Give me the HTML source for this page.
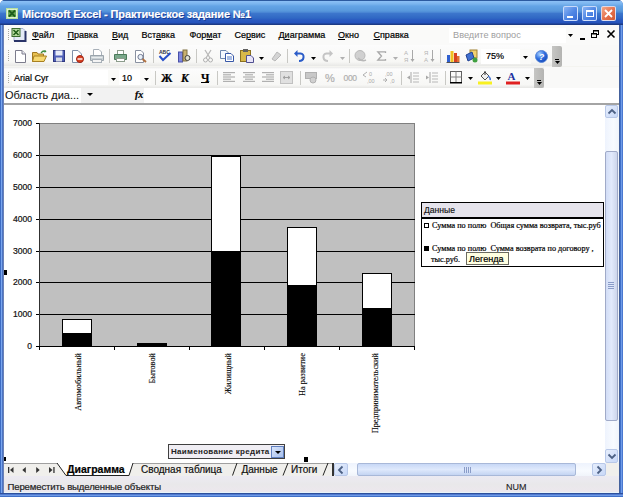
<!DOCTYPE html><html><head><meta charset="utf-8"><style>
*{margin:0;padding:0;box-sizing:border-box}
html,body{width:623px;height:497px;overflow:hidden;background:#fff}
body{position:relative;font-family:"Liberation Sans",sans-serif;font-size:9px;color:#000}
.a{position:absolute}
.t{position:absolute;white-space:nowrap;line-height:1;-webkit-text-stroke:0.2px currentColor}
svg{position:absolute;overflow:visible}
.u{text-decoration:underline;text-underline-offset:1px}
</style></head><body>
<div class="a" style="left:0px;top:0px;width:623px;height:497px;background:#3d6cc4;border-radius:5px 5px 0 0"></div>
<div class="a" style="left:1px;top:22px;width:1px;height:475px;background:#79a6ee"></div>
<div class="a" style="left:2px;top:22px;width:1px;height:475px;background:#4d74c4"></div>
<div class="a" style="left:3px;top:22px;width:1px;height:475px;background:#6a82b6"></div>
<div class="a" style="left:619px;top:22px;width:1px;height:475px;background:#44619c"></div>
<div class="a" style="left:620px;top:22px;width:1px;height:475px;background:#3f6fc8"></div>
<div class="a" style="left:621px;top:22px;width:1px;height:475px;background:#6f9ce8"></div>
<div class="a" style="left:622px;top:22px;width:1px;height:475px;background:#4a78d0"></div>
<div class="a" style="left:0px;top:493px;width:623px;height:1px;background:#2e4f9c"></div>
<div class="a" style="left:0px;top:494px;width:623px;height:1px;background:#4f7ad0"></div>
<div class="a" style="left:0px;top:495px;width:623px;height:1px;background:#6f9ae6"></div>
<div class="a" style="left:0px;top:496px;width:623px;height:1px;background:#4070c8"></div>
<div class="a" style="left:0px;top:0px;width:623px;height:25px;border-radius:5px 5px 0 0;background:linear-gradient(#2c5aa0 0px,#2c5aa0 1px,#8cc0f6 1px,#7ab4ee 4px,#64a4e6 6px,#5898dc 11px,#4a86d4 12.5px,#3c76cc 13.5px,#3068c4 18px,#2a5ac0 20px,#2452bc 23px,#1c3a84 24px,#1c3a84 25px)"></div>
<svg style="left:6px;top:8px;" width="12" height="11" viewBox="0 0 12 11"><rect x="0.5" y="0.5" width="11" height="10" fill="#dff2d0" stroke="#b8e0a0" stroke-width="1"/><rect x="2" y="2" width="8" height="7" fill="#6aa858"/><path d="M3,2.5 L9,8.5 M9,2.5 L3,8.5" stroke="#1d5e1a" stroke-width="1.8"/></svg>
<div class="t" style="left:22px;top:9px;color:#fff;font-weight:bold;font-size:11px;letter-spacing:-0.14px;text-shadow:1px 1px 0 #1a3c94">Microsoft Excel - Практическое задание №1</div>
<div class="a" style="left:563px;top:6px;width:15px;height:15px;border:1px solid rgba(225,235,255,0.85);border-radius:2px;background:linear-gradient(135deg,#8ab4f4,#4f86e4 55%,#3a6ed8)"><div class="a" style="left:3px;top:9px;width:6px;height:2px;background:#fff"></div></div>
<div class="a" style="left:582px;top:6px;width:15px;height:15px;border:1px solid rgba(225,235,255,0.85);border-radius:2px;background:linear-gradient(135deg,#8ab4f4,#4f86e4 55%,#3a6ed8)"><div class="a" style="left:3px;top:3px;width:8px;height:7px;border:1px solid #fff;border-top-width:2px"></div></div>
<div class="a" style="left:601px;top:6px;width:15px;height:15px;border:1px solid rgba(225,235,255,0.85);border-radius:2px;background:linear-gradient(135deg,#f4a888,#e4704c 55%,#d45a30)"><svg style="left:2px;top:2px" width="9" height="9"><path d="M1,1 L8,8 M8,1 L1,8" stroke="#fff" stroke-width="1.8"/></svg></div>
<div class="a" style="left:4px;top:25px;width:615px;height:468px;background:#f9f9f8"></div>
<div class="a" style="left:4px;top:25px;width:615px;height:20px;background:#fafaf9"></div>
<div class="a" style="left:8px;top:29px;width:1px;height:1px;background:#a8a8a0"></div>
<div class="a" style="left:8px;top:31px;width:1px;height:1px;background:#a8a8a0"></div>
<div class="a" style="left:8px;top:33px;width:1px;height:1px;background:#a8a8a0"></div>
<div class="a" style="left:8px;top:35px;width:1px;height:1px;background:#a8a8a0"></div>
<div class="a" style="left:8px;top:37px;width:1px;height:1px;background:#a8a8a0"></div>
<div class="a" style="left:8px;top:39px;width:1px;height:1px;background:#a8a8a0"></div>
<svg style="left:11px;top:28px;" width="16" height="14" viewBox="0 0 16 14"><path d="M3,0.5 H12 L14.5,3 V13 H3 Z" fill="#e4eaf6" stroke="#a8b4d0"/><path d="M14.5,3 V13 H3" fill="none" stroke="#2a3468" stroke-width="2"/><rect x="1" y="0.5" width="8" height="8" fill="#b8dca0" stroke="#3a6a30"/><path d="M2.5,2 L7.5,7 M7.5,2 L2.5,7" stroke="#1e5a18" stroke-width="1.5"/></svg>
<div class="t" style="left:32px;top:31px;font-size:9px;color:#000"><span class="u">Ф</span>айл</div>
<div class="t" style="left:67.5px;top:31px;font-size:9px;color:#000"><span class="u">П</span>равка</div>
<div class="t" style="left:112px;top:31px;font-size:9px;color:#000"><span class="u">В</span>ид</div>
<div class="t" style="left:141.5px;top:31px;font-size:9px;color:#000">Вст<span class="u">а</span>вка</div>
<div class="t" style="left:189.5px;top:31px;font-size:9px;color:#000">Фор<span class="u">м</span>ат</div>
<div class="t" style="left:234.5px;top:31px;font-size:9px;color:#000">Се<span class="u">р</span>вис</div>
<div class="t" style="left:278.5px;top:31px;font-size:9px;color:#000">Д<span class="u">и</span>аграмма</div>
<div class="t" style="left:338px;top:31px;font-size:9px;color:#000"><span class="u">О</span>кно</div>
<div class="t" style="left:373.5px;top:31px;font-size:9px;color:#000"><span class="u">С</span>правка</div>
<div class="a" style="left:449px;top:28px;width:117px;height:15px;background:#fff"></div>
<div class="t" style="left:453px;top:30.5px;font-size:9.2px;color:#a0a0a0;-webkit-text-stroke:0">Введите вопрос</div>
<svg style="left:567.5px;top:34px;" width="5" height="3" viewBox="0 0 5 3"><polygon points="0,0 5,0 2.5,3" fill="#000"/></svg>
<div class="a" style="left:580px;top:38px;width:5px;height:2px;background:#000"></div>
<svg style="left:591px;top:30px;" width="8" height="8" viewBox="0 0 8 8"><rect x="2.5" y="0.5" width="5" height="4" fill="none" stroke="#000"/><rect x="2" y="0" width="6" height="1.5" fill="#000"/><rect x="0.5" y="3.5" width="5" height="4" fill="#f9f9f6" stroke="#000"/><rect x="0" y="3" width="6" height="1.5" fill="#000"/></svg>
<svg style="left:607px;top:30px;" width="8" height="8" viewBox="0 0 8 8"><path d="M0.5,0.5 L7.5,7.5 M7.5,0.5 L0.5,7.5" stroke="#000" stroke-width="1.6"/></svg>
<div class="a" style="left:4px;top:45px;width:558px;height:21px;background:linear-gradient(#fcfcfc,#f7f7f5 80%,#e8e8e6)"></div>
<div class="a" style="left:4px;top:66px;width:615px;height:1px;background:#f4f4f0"></div>
<div class="a" style="left:8px;top:50px;width:1px;height:1px;background:#a8a8a0"></div>
<div class="a" style="left:8px;top:52px;width:1px;height:1px;background:#a8a8a0"></div>
<div class="a" style="left:8px;top:54px;width:1px;height:1px;background:#a8a8a0"></div>
<div class="a" style="left:8px;top:56px;width:1px;height:1px;background:#a8a8a0"></div>
<div class="a" style="left:8px;top:58px;width:1px;height:1px;background:#a8a8a0"></div>
<div class="a" style="left:8px;top:60px;width:1px;height:1px;background:#a8a8a0"></div>
<div class="a" style="left:552px;top:46px;width:10px;height:21px;background:linear-gradient(90deg,#c6c6c4,#b4b4b2);border-radius:0 2px 2px 0"></div>
<div class="a" style="left:555px;top:59px;width:4px;height:1px;background:#000"></div>
<svg style="left:554.5px;top:61px;" width="5" height="3" viewBox="0 0 5 3"><polygon points="0,0 5,0 2.5,3" fill="#000"/></svg>
<div class="a" style="left:109px;top:49px;width:1px;height:14px;background:#c8c8c4"></div>
<div class="a" style="left:153px;top:49px;width:1px;height:14px;background:#c8c8c4"></div>
<div class="a" style="left:196px;top:49px;width:1px;height:14px;background:#c8c8c4"></div>
<div class="a" style="left:287px;top:49px;width:1px;height:14px;background:#c8c8c4"></div>
<div class="a" style="left:349px;top:49px;width:1px;height:14px;background:#c8c8c4"></div>
<div class="a" style="left:440px;top:49px;width:1px;height:14px;background:#c8c8c4"></div>
<svg style="left:15px;top:50px;" width="11" height="13" viewBox="0 0 11 13"><path d="M0.5,0.5 H7 L10.5,4 V12.5 H0.5 Z" fill="#fff" stroke="#7c7c8c"/><path d="M7,0.5 V4 H10.5" fill="#e8e8f0" stroke="#7c7c8c"/></svg>
<svg style="left:32px;top:50px;" width="15" height="12" viewBox="0 0 15 12"><path d="M0.5,2.5 H5 L6,4 H11.5 V11.5 H0.5 Z" fill="#e8c050" stroke="#a07820"/><path d="M2,6 H14.5 L12,11.5 H0.5 Z" fill="#f6d870" stroke="#a88020"/><path d="M9,3 Q11,0 14,1.5" stroke="#3a8a3a" fill="none" stroke-width="1.3"/><path d="M13,0 L14.5,2 L12,2.5Z" fill="#3a8a3a"/></svg>
<svg style="left:53px;top:50px;" width="12" height="12" viewBox="0 0 12 12"><rect x="0.5" y="0.5" width="11" height="11" fill="#5060b8" stroke="#303880"/><rect x="2.5" y="0.5" width="7" height="5" fill="#e8ecf8"/><rect x="3" y="7.5" width="6" height="4" fill="#d8dce8"/></svg>
<svg style="left:72px;top:50px;" width="12" height="13" viewBox="0 0 12 13"><path d="M0.5,0.5 H6 L9.5,4 V12.5 H0.5 Z" fill="#fff" stroke="#8090a8"/><circle cx="8" cy="9" r="3.5" fill="#d84020" stroke="#a02010"/><rect x="5.5" y="8.3" width="5" height="1.4" fill="#fff"/></svg>
<svg style="left:90px;top:49px;" width="14" height="14" viewBox="0 0 14 14"><path d="M3.5,0.5 H9 L11.5,3 V7 H3.5 Z" fill="#fff" stroke="#a8b0b8"/><path d="M0.5,6.5 H13.5 V11.5 H0.5 Z" fill="#c8d0d4" stroke="#9aa4ac"/><rect x="2.5" y="10.5" width="9" height="3" fill="#f4f4f4" stroke="#a8b0b8"/><rect x="1.5" y="8" width="11" height="1" fill="#e8ecee"/></svg>
<svg style="left:114px;top:50px;" width="13" height="12" viewBox="0 0 13 12"><rect x="3.5" y="0.5" width="6" height="4" fill="#fff" stroke="#8c9c8c"/><path d="M0.5,4.5 H12.5 V9.5 H0.5 Z" fill="#7aa88a" stroke="#4a7a5a"/><rect x="2.5" y="8.5" width="8" height="3" fill="#fff" stroke="#8c9c8c"/></svg>
<svg style="left:135px;top:50px;" width="12" height="13" viewBox="0 0 12 13"><path d="M0.5,0.5 H6 L8.5,3 V12.5 H0.5 Z" fill="#fff" stroke="#8890a0"/><circle cx="5.5" cy="7" r="2.6" fill="#e8f0f8" stroke="#707890"/><path d="M7.5,9 L11,12" stroke="#b07040" stroke-width="2"/></svg>
<svg style="left:158px;top:49px;" width="14" height="13" viewBox="0 0 14 13"><text x="1" y="5" font-size="5" font-family="Liberation Sans" font-weight="bold" fill="#303040">ABC</text><path d="M1.5,7 L5,11 L12.5,4" fill="none" stroke="#2850c8" stroke-width="2"/></svg>
<svg style="left:178px;top:49px;" width="13" height="14" viewBox="0 0 13 14"><rect x="0.5" y="3" width="4" height="10" fill="#8088e0" stroke="#4850a8"/><rect x="5" y="1" width="4" height="11" fill="#c8b070" stroke="#807040"/><circle cx="9.5" cy="9" r="2.5" fill="#e0e0d0" stroke="#404040"/></svg>
<svg style="left:203px;top:50px;" width="10" height="13" viewBox="0 0 10 13"><path d="M2,0 L7,8 M8,0 L3,8" stroke="#b8b8b8" stroke-width="1.3"/><circle cx="2.5" cy="10" r="2" fill="none" stroke="#b0b0b0"/><circle cx="7.5" cy="10" r="2" fill="none" stroke="#b0b0b0"/></svg>
<svg style="left:220px;top:50px;" width="14" height="12" viewBox="0 0 14 12"><path d="M0.5,0.5 H6 L8.5,3 V8.5 H0.5 Z" fill="#f4f8ff" stroke="#7088b0"/><path d="M5.5,3.5 H11 L13.5,6 V11.5 H5.5 Z" fill="#fff" stroke="#3858a8"/><path d="M7,7 H12 M7,9 H12" stroke="#5078c8"/></svg>
<svg style="left:240px;top:49px;" width="14" height="14" viewBox="0 0 14 14"><rect x="0.5" y="1.5" width="10" height="11" fill="#d8b848" stroke="#8a7020"/><rect x="3" y="0" width="5" height="3" fill="#606060"/><path d="M6.5,6.5 H11 L13.5,9 V13.5 H6.5 Z" fill="#e8e4f8" stroke="#505090"/></svg>
<svg style="left:258.5px;top:57px;" width="5" height="3" viewBox="0 0 5 3"><polygon points="0,0 5,0 2.5,3" fill="#000"/></svg>
<svg style="left:271px;top:50px;" width="11" height="12" viewBox="0 0 11 12"><path d="M1,9 L6,2 L10,5 L4,11 Z" fill="#d4d4d4" stroke="#b8b8b8"/></svg>
<svg style="left:294px;top:50px;" width="11" height="12" viewBox="0 0 11 12"><path d="M2,3.5 H6.5 Q10,4 9.5,7.5 Q9,11 5,11" fill="none" stroke="#2a5cc8" stroke-width="2"/><path d="M0,3.5 L3.5,0 V7 Z" fill="#2a5cc8"/></svg>
<svg style="left:310.5px;top:57px;" width="5" height="3" viewBox="0 0 5 3"><polygon points="0,0 5,0 2.5,3" fill="#000"/></svg>
<svg style="left:322px;top:50px;" width="11" height="12" viewBox="0 0 11 12"><path d="M9,3.5 H4.5 Q1,4 1.5,7.5 Q2,11 6,11" fill="none" stroke="#c4c4c4" stroke-width="2"/><path d="M11,3.5 L7.5,0 V7 Z" fill="#c4c4c4"/></svg>
<svg style="left:339.5px;top:57px;" width="5" height="3" viewBox="0 0 5 3"><polygon points="0,0 5,0 2.5,3" fill="#b0b0b0"/></svg>
<svg style="left:354px;top:50px;" width="12" height="12" viewBox="0 0 12 12"><circle cx="6" cy="5.5" r="5" fill="#d0d0d0" stroke="#b8b8b8"/><path d="M4,8 Q8,12 12,10" fill="none" stroke="#b8b8b8" stroke-width="1.5"/></svg>
<svg style="left:377px;top:51px;" width="9" height="10" viewBox="0 0 9 10"><path d="M8.5,2 V0.8 H0.8 L4.5,5 L0.8,9.2 H8.5 V8" fill="none" stroke="#a8a8a8" stroke-width="1.3"/></svg>
<svg style="left:392.5px;top:57px;" width="5" height="3" viewBox="0 0 5 3"><polygon points="0,0 5,0 2.5,3" fill="#b0b0b0"/></svg>
<svg style="left:404px;top:49px;" width="11" height="14" viewBox="0 0 11 14"><text x="0" y="6" font-size="6" font-family="Liberation Sans" fill="#b4b4b4">A</text><text x="0" y="13" font-size="6" font-family="Liberation Sans" fill="#b4b4b4">Я</text><path d="M8.5,1 V12" stroke="#a8a8a8"/><path d="M6.5,10 L8.5,13 L10.5,10" fill="#a8a8a8"/></svg>
<svg style="left:424px;top:49px;" width="11" height="14" viewBox="0 0 11 14"><text x="0" y="6" font-size="6" font-family="Liberation Sans" fill="#b4b4b4">Я</text><text x="0" y="13" font-size="6" font-family="Liberation Sans" fill="#b4b4b4">A</text><path d="M8.5,1 V12" stroke="#a8a8a8"/><path d="M6.5,10 L8.5,13 L10.5,10" fill="#a8a8a8"/></svg>
<svg style="left:446px;top:49px;" width="14" height="14" viewBox="0 0 14 14"><path d="M0.5,13.5 H13.5" stroke="#505050"/><rect x="1" y="6" width="3" height="7" fill="#3060d0"/><rect x="4.5" y="2" width="3" height="11" fill="#f0c020"/><rect x="8" y="4" width="3" height="9" fill="#d84020"/><rect x="11" y="7" width="2.5" height="6" fill="#e07030"/></svg>
<svg style="left:465px;top:49px;" width="14" height="14" viewBox="0 0 14 14"><rect x="5" y="1" width="7" height="8" fill="#f0d070" stroke="#a08030"/><path d="M1,6 L7,3 L9,9 L3,12 Z" fill="#4070d0" stroke="#204090"/><circle cx="10" cy="11" r="2.5" fill="#40a040"/></svg>
<div class="a" style="left:481px;top:49px;width:50px;height:15px;background:#fff"></div>
<div class="a" style="left:520px;top:49px;width:11px;height:15px;background:#fafaf8"></div>
<div class="t" style="left:486px;top:52px;font-size:9px">75%</div>
<svg style="left:523.0px;top:56px;" width="5" height="3" viewBox="0 0 5 3"><polygon points="0,0 5,0 2.5,3" fill="#000"/></svg>
<svg style="left:535px;top:50px;" width="13" height="13" viewBox="0 0 13 13"><defs><radialGradient id="hg" cx="0.35" cy="0.3" r="0.8"><stop offset="0" stop-color="#a8d0ff"/><stop offset="0.5" stop-color="#3070e0"/><stop offset="1" stop-color="#1040b0"/></radialGradient></defs><circle cx="6.5" cy="6.5" r="6" fill="url(#hg)" stroke="#5a88d8"/><text x="3.8" y="10" font-size="9" font-weight="bold" font-style="italic" font-family="Liberation Sans" fill="#fff">?</text></svg>
<div class="a" style="left:4px;top:67px;width:540px;height:21px;background:linear-gradient(#ebebea,#fcfcfc 2px,#f7f7f5 85%,#e6e6e4)"></div>
<div class="a" style="left:8px;top:72px;width:1px;height:1px;background:#a8a8a0"></div>
<div class="a" style="left:8px;top:74px;width:1px;height:1px;background:#a8a8a0"></div>
<div class="a" style="left:8px;top:76px;width:1px;height:1px;background:#a8a8a0"></div>
<div class="a" style="left:8px;top:78px;width:1px;height:1px;background:#a8a8a0"></div>
<div class="a" style="left:8px;top:80px;width:1px;height:1px;background:#a8a8a0"></div>
<div class="a" style="left:8px;top:82px;width:1px;height:1px;background:#a8a8a0"></div>
<div class="a" style="left:534px;top:68px;width:10px;height:20px;background:linear-gradient(90deg,#c6c6c4,#b4b4b2);border-radius:0 2px 2px 0"></div>
<div class="a" style="left:537px;top:80px;width:4px;height:1px;background:#000"></div>
<svg style="left:536.5px;top:82px;" width="5" height="3" viewBox="0 0 5 3"><polygon points="0,0 5,0 2.5,3" fill="#000"/></svg>
<div class="a" style="left:12px;top:70px;width:107px;height:15px;background:#fff"></div>
<div class="a" style="left:119px;top:70px;width:32px;height:15px;background:#fff"></div>
<div class="a" style="left:140px;top:70px;width:11px;height:15px;background:#fafaf8"></div>
<div class="a" style="left:108px;top:70px;width:11px;height:15px;background:#fafaf8"></div>
<div class="t" style="left:14px;top:74px;font-size:9px;color:#000">Arial Cyr</div>
<svg style="left:110.5px;top:78px;" width="5" height="3" viewBox="0 0 5 3"><polygon points="0,0 5,0 2.5,3" fill="#000"/></svg>
<div class="t" style="left:122px;top:74px;font-size:9px">10</div>
<svg style="left:143.5px;top:78px;" width="5" height="3" viewBox="0 0 5 3"><polygon points="0,0 5,0 2.5,3" fill="#000"/></svg>
<div class="a" style="left:155px;top:71px;width:1px;height:14px;background:#c8c8c4"></div>
<div class="a" style="left:217px;top:71px;width:1px;height:14px;background:#c8c8c4"></div>
<div class="a" style="left:300px;top:71px;width:1px;height:14px;background:#c8c8c4"></div>
<div class="a" style="left:401px;top:71px;width:1px;height:14px;background:#c8c8c4"></div>
<div class="a" style="left:445px;top:71px;width:1px;height:14px;background:#c8c8c4"></div>
<div class="t" style="left:161px;top:72.5px;font-size:11.5px;font-weight:bold;font-family:'Liberation Serif',serif">Ж</div>
<div class="t" style="left:181px;top:72.5px;font-size:11.5px;font-weight:bold;font-style:italic;font-family:'Liberation Serif',serif">К</div>
<div class="t" style="left:201px;top:72.5px;font-size:11.5px;font-weight:bold;font-family:'Liberation Serif',serif">Ч</div>
<div class="a" style="left:201px;top:82px;width:8px;height:1px;background:#000"></div>
<svg style="left:223px;top:72px;" width="13" height="12" viewBox="0 0 13 12"><rect x="0" y="0.0" width="12" height="1.2" fill="#b0b0b0"/><rect x="0" y="2.2" width="8" height="1.2" fill="#b0b0b0"/><rect x="0" y="4.4" width="12" height="1.2" fill="#b0b0b0"/><rect x="0" y="6.6000000000000005" width="8" height="1.2" fill="#b0b0b0"/><rect x="0" y="8.8" width="12" height="1.2" fill="#b0b0b0"/></svg>
<svg style="left:243px;top:72px;" width="13" height="12" viewBox="0 0 13 12"><rect x="0" y="0.0" width="12" height="1.2" fill="#b0b0b0"/><rect x="2" y="2.2" width="8" height="1.2" fill="#b0b0b0"/><rect x="0" y="4.4" width="12" height="1.2" fill="#b0b0b0"/><rect x="2" y="6.6000000000000005" width="8" height="1.2" fill="#b0b0b0"/><rect x="0" y="8.8" width="12" height="1.2" fill="#b0b0b0"/></svg>
<svg style="left:262px;top:72px;" width="13" height="12" viewBox="0 0 13 12"><rect x="0" y="0.0" width="12" height="1.2" fill="#b0b0b0"/><rect x="4" y="2.2" width="8" height="1.2" fill="#b0b0b0"/><rect x="0" y="4.4" width="12" height="1.2" fill="#b0b0b0"/><rect x="4" y="6.6000000000000005" width="8" height="1.2" fill="#b0b0b0"/><rect x="0" y="8.8" width="12" height="1.2" fill="#b0b0b0"/></svg>
<svg style="left:280px;top:71px;" width="13" height="13" viewBox="0 0 13 13"><rect x="0.5" y="0.5" width="12" height="12" fill="#e0e0e0" stroke="#c0c0c0"/><path d="M3,6.5 H10 M3,6.5 L5,5 M3,6.5 L5,8 M10,6.5 L8,5 M10,6.5 L8,8" stroke="#a0a0a0" fill="none"/></svg>
<svg style="left:305px;top:71px;" width="13" height="13" viewBox="0 0 13 13"><rect x="0.5" y="1.5" width="11" height="6" fill="#c8c8c8" stroke="#b0b0b0"/><circle cx="8" cy="9" r="3" fill="#d0d0d0" stroke="#b0b0b0"/></svg>
<div class="t" style="left:325px;top:73px;font-size:11px;color:#b0b0b0">%</div>
<div class="t" style="left:343.5px;top:74px;font-size:8.5px;color:#b0b0b0;letter-spacing:-0.3px">000</div>
<svg style="left:363px;top:71px;" width="13" height="13" viewBox="0 0 13 13"><text x="6" y="5" font-size="5.5" font-family="Liberation Sans" fill="#a8a8a8">0</text><text x="4" y="12" font-size="5.5" font-family="Liberation Sans" fill="#a8a8a8">,00</text><path d="M0,4 L4,1 M0,4 L3,6" stroke="#b0b0b0"/></svg>
<svg style="left:383px;top:71px;" width="13" height="13" viewBox="0 0 13 13"><text x="2" y="5" font-size="5.5" font-family="Liberation Sans" fill="#a8a8a8">,00</text><text x="7" y="12" font-size="5.5" font-family="Liberation Sans" fill="#a8a8a8">,0</text><path d="M0,9 H4 M2,7 L4,9 L2,11" stroke="#b0b0b0" fill="none"/></svg>
<svg style="left:407px;top:71px;" width="13" height="13" viewBox="0 0 13 13"><path d="M4,1 V12" stroke="#a8a8a8"/><path d="M6,2 H12 M6,5 H12 M6,8 H12 M6,11 H12" stroke="#b8b8b8" stroke-width="1.2"/><path d="M0,6.5 L3,4.5 V8.5Z" fill="#a8a8a8"/></svg>
<svg style="left:426px;top:71px;" width="13" height="13" viewBox="0 0 13 13"><path d="M4,1 V12" stroke="#a8a8a8"/><path d="M6,2 H12 M6,5 H12 M6,8 H12 M6,11 H12" stroke="#b8b8b8" stroke-width="1.2"/><path d="M3,6.5 L0,4.5 V8.5Z" fill="#a8a8a8"/></svg>
<svg style="left:450px;top:71px;" width="12" height="12" viewBox="0 0 12 12"><rect x="0.5" y="0.5" width="11" height="11" fill="none" stroke="#606060"/><path d="M6,0.5 V11.5 M0.5,6 H11.5" stroke="#808080"/><rect x="0" y="11" width="12" height="1.5" fill="#000"/></svg>
<svg style="left:467.5px;top:77px;" width="5" height="3" viewBox="0 0 5 3"><polygon points="0,0 5,0 2.5,3" fill="#000"/></svg>
<svg style="left:478px;top:70px;" width="14" height="15" viewBox="0 0 14 15"><path d="M3,6 L7,2 L11,6 L7,10 Z" fill="#f0f0f0" stroke="#505050"/><path d="M10,6 Q13,8 12,10" stroke="#4070d0" stroke-width="1.5" fill="none"/><path d="M7,1 V5" stroke="#303030"/><rect x="0" y="11.5" width="14" height="3" fill="#f8f020"/></svg>
<svg style="left:496.0px;top:77px;" width="5" height="3" viewBox="0 0 5 3"><polygon points="0,0 5,0 2.5,3" fill="#000"/></svg>
<svg style="left:506px;top:70px;" width="14" height="15" viewBox="0 0 14 15"><text x="1.5" y="10" font-size="11" font-weight="bold" font-family="Liberation Serif" fill="#2030a0">A</text><rect x="0" y="11.5" width="14" height="3" fill="#e02020"/></svg>
<svg style="left:524.5px;top:77px;" width="5" height="3" viewBox="0 0 5 3"><polygon points="0,0 5,0 2.5,3" fill="#000"/></svg>
<div class="a" style="left:4px;top:88px;width:615px;height:15px;background:#fff"></div>
<div class="a" style="left:81px;top:88px;width:63px;height:15px;background:#f2f2f2"></div>
<div class="t" style="left:5px;top:90px;font-size:11px;color:#111;-webkit-text-stroke:0.05px #111">Область диа...</div>
<svg style="left:87.0px;top:93px;" width="6" height="3" viewBox="0 0 6 3"><polygon points="0,0 6,0 3.0,3" fill="#000"/></svg>
<div class="t" style="left:135px;top:89.5px;font-size:10px;font-style:italic;font-weight:bold;font-family:'Liberation Serif',serif">fx</div>
<div class="a" style="left:4px;top:103px;width:615px;height:2px;background:#a4a4a4"></div>
<div class="a" style="left:4px;top:105px;width:601px;height:358px;background:#fff"></div>
<div class="a" style="left:40px;top:123px;width:375px;height:224px;background:#c0c0c0;border:1px solid #808080;border-left:none;border-bottom:none"></div>
<div class="a" style="left:40px;top:314px;width:375px;height:1px;background:#000"></div>
<div class="a" style="left:40px;top:282px;width:375px;height:1px;background:#000"></div>
<div class="a" style="left:40px;top:251px;width:375px;height:1px;background:#000"></div>
<div class="a" style="left:40px;top:219px;width:375px;height:1px;background:#000"></div>
<div class="a" style="left:40px;top:187px;width:375px;height:1px;background:#000"></div>
<div class="a" style="left:40px;top:155px;width:375px;height:1px;background:#000"></div>
<div class="a" style="left:39px;top:123px;width:1px;height:224px;background:#303030"></div>
<div class="a" style="left:39px;top:346px;width:376px;height:1px;background:#000"></div>
<div class="a" style="left:36px;top:346px;width:3px;height:1px;background:#000"></div>
<div class="t" style="left:0px;top:341.5px;width:32px;text-align:right;font-size:8.6px;color:#111">0</div>
<div class="a" style="left:36px;top:314px;width:3px;height:1px;background:#000"></div>
<div class="t" style="left:0px;top:309.5px;width:32px;text-align:right;font-size:8.6px;color:#111">1000</div>
<div class="a" style="left:36px;top:282px;width:3px;height:1px;background:#000"></div>
<div class="t" style="left:0px;top:277.5px;width:32px;text-align:right;font-size:8.6px;color:#111">2000</div>
<div class="a" style="left:36px;top:251px;width:3px;height:1px;background:#000"></div>
<div class="t" style="left:0px;top:246.5px;width:32px;text-align:right;font-size:8.6px;color:#111">3000</div>
<div class="a" style="left:36px;top:219px;width:3px;height:1px;background:#000"></div>
<div class="t" style="left:0px;top:214.5px;width:32px;text-align:right;font-size:8.6px;color:#111">4000</div>
<div class="a" style="left:36px;top:187px;width:3px;height:1px;background:#000"></div>
<div class="t" style="left:0px;top:182.5px;width:32px;text-align:right;font-size:8.6px;color:#111">5000</div>
<div class="a" style="left:36px;top:155px;width:3px;height:1px;background:#000"></div>
<div class="t" style="left:0px;top:150.5px;width:32px;text-align:right;font-size:8.6px;color:#111">6000</div>
<div class="a" style="left:36px;top:123px;width:3px;height:1px;background:#000"></div>
<div class="t" style="left:0px;top:118.5px;width:32px;text-align:right;font-size:8.6px;color:#111">7000</div>
<div class="a" style="left:39px;top:347px;width:1px;height:3px;background:#000"></div>
<div class="a" style="left:114px;top:347px;width:1px;height:3px;background:#000"></div>
<div class="a" style="left:189px;top:347px;width:1px;height:3px;background:#000"></div>
<div class="a" style="left:264px;top:347px;width:1px;height:3px;background:#000"></div>
<div class="a" style="left:339px;top:347px;width:1px;height:3px;background:#000"></div>
<div class="a" style="left:414px;top:347px;width:1px;height:3px;background:#000"></div>
<div class="a" style="left:62px;top:319px;width:30px;height:28px;background:#fff;border:1px solid #000"></div>
<div class="a" style="left:62px;top:333px;width:30px;height:14px;background:#000"></div>
<div class="a" style="left:137px;top:343px;width:30px;height:4px;background:#000"></div>
<div class="a" style="left:211px;top:156px;width:30px;height:191px;background:#fff;border:1px solid #000"></div>
<div class="a" style="left:211px;top:251px;width:30px;height:96px;background:#000"></div>
<div class="a" style="left:287px;top:227px;width:30px;height:120px;background:#fff;border:1px solid #000"></div>
<div class="a" style="left:287px;top:285px;width:30px;height:62px;background:#000"></div>
<div class="a" style="left:362px;top:273px;width:30px;height:74px;background:#fff;border:1px solid #000"></div>
<div class="a" style="left:362px;top:308px;width:30px;height:39px;background:#000"></div>
<div class="t" style="left:78.5px;top:353px;font-family:'Liberation Serif',serif;font-size:8.3px;-webkit-text-stroke:0.12px #000;transform-origin:0 0;transform:rotate(-90deg) translate(-100%,-50%);">Автомобильный</div>
<div class="t" style="left:153px;top:353px;font-family:'Liberation Serif',serif;font-size:8.3px;-webkit-text-stroke:0.12px #000;transform-origin:0 0;transform:rotate(-90deg) translate(-100%,-50%);">Бытовой</div>
<div class="t" style="left:229px;top:353px;font-family:'Liberation Serif',serif;font-size:8.3px;-webkit-text-stroke:0.12px #000;transform-origin:0 0;transform:rotate(-90deg) translate(-100%,-50%);">Жилищный</div>
<div class="t" style="left:302.5px;top:353px;font-family:'Liberation Serif',serif;font-size:8.3px;-webkit-text-stroke:0.12px #000;transform-origin:0 0;transform:rotate(-90deg) translate(-100%,-50%);">На развитие</div>
<div class="t" style="left:376px;top:353px;font-family:'Liberation Serif',serif;font-size:8.3px;-webkit-text-stroke:0.12px #000;transform-origin:0 0;transform:rotate(-90deg) translate(-100%,-50%);">Предпринимательский</div>
<div class="a" style="left:421px;top:202px;width:183px;height:65px;background:#fff;border:1px solid #000"></div>
<div class="a" style="left:422px;top:203px;width:181px;height:15px;background:#e6e4ec"></div>
<div class="a" style="left:422px;top:217px;width:181px;height:2px;background:#000"></div>
<div class="t" style="left:424px;top:206px;font-size:8.6px;color:#111;-webkit-text-stroke:0.15px #111">Данные</div>
<div class="a" style="left:424px;top:223px;width:5px;height:5px;background:#fff;border:1px solid #000"></div>
<div class="t" style="left:432px;top:221.5px;font-size:8.2px;font-family:'Liberation Serif',serif">Сумма по полю&nbsp; Общая сумма возврата, тыс.руб</div>
<div class="a" style="left:424px;top:246px;width:5px;height:5px;background:#000"></div>
<div class="t" style="left:432px;top:245px;font-size:8.2px;font-family:'Liberation Serif',serif">Сумма по полю&nbsp; Сумма возврата по договору ,</div>
<div class="t" style="left:431px;top:255.5px;font-size:8.2px;font-family:'Liberation Serif',serif">тыс.руб.</div>
<div class="a" style="left:466px;top:252px;width:43px;height:13px;background:#ffffe1;border:1px solid #6a6a60"></div>
<div class="t" style="left:469px;top:254.5px;font-size:9.1px;color:#000">Легенда</div>
<div class="a" style="left:4px;top:270px;width:3px;height:5px;background:#000"></div>
<div class="a" style="left:4px;top:457px;width:2px;height:4px;background:#000"></div>
<div class="a" style="left:304px;top:457px;width:4px;height:5px;background:#000"></div>
<div class="a" style="left:168px;top:444px;width:117px;height:15px;background:#f0eef4;border:1px solid #404040"></div>
<div class="t" style="left:171px;top:447.5px;font-size:8px;font-weight:bold;letter-spacing:0.3px;color:#222;-webkit-text-stroke:0">Наименование кредита</div>
<div class="a" style="left:271px;top:446px;width:13px;height:12px;border:1px solid #6080c0;background:linear-gradient(135deg,#d8e4fa,#a8c0ec)"></div>
<svg style="left:274.5px;top:450.5px;" width="6" height="3" viewBox="0 0 6 3"><polygon points="0,0 6,0 3.0,3" fill="#000"/></svg>
<div class="a" style="left:605px;top:105px;width:14px;height:358px;background:linear-gradient(90deg,#eef3fd,#f8fbff 60%,#f0f4fa)"></div>
<div class="a" style="left:605px;top:105px;width:13px;height:13px;border:1px solid #b8c8e8;border-radius:2px;background:linear-gradient(135deg,#e6eefc,#c8d8f8)"></div>
<svg style="left:608px;top:109px;" width="8" height="5" viewBox="0 0 8 5"><path d="M0.5,4.5 L4,1 L7.5,4.5" fill="none" stroke="#4d6185" stroke-width="1.8"/></svg>
<div class="a" style="left:605px;top:151px;width:13px;height:270px;border:1px solid #a0aac8;border-radius:2px;background:linear-gradient(90deg,#d2ddf6,#e2eafc 50%,#cdd6ec)"></div>
<div class="a" style="left:608px;top:282px;width:6px;height:1px;background:#8a9cc8"></div>
<div class="a" style="left:608px;top:284px;width:6px;height:1px;background:#8a9cc8"></div>
<div class="a" style="left:608px;top:286px;width:6px;height:1px;background:#8a9cc8"></div>
<div class="a" style="left:608px;top:288px;width:6px;height:1px;background:#8a9cc8"></div>
<div class="a" style="left:605px;top:449px;width:13px;height:14px;border:1px solid #b8c8e8;border-radius:2px;background:linear-gradient(135deg,#e6eefc,#c8d8f8)"></div>
<svg style="left:608px;top:454px;" width="8" height="5" viewBox="0 0 8 5"><path d="M0.5,0.5 L4,4 L7.5,0.5" fill="none" stroke="#4d6185" stroke-width="1.8"/></svg>
<div class="a" style="left:4px;top:463px;width:615px;height:13px;background:#f0efec"></div>
<div class="a" style="left:4px;top:463px;width:330px;height:1px;background:#a0a0a0"></div>
<svg style="left:8px;top:466.5px;" width="6" height="6" viewBox="0 0 6 6"><rect x="0" y="0" width="1.3" height="6" fill="#333"/><polygon points="5.5,0 5.5,6 2,3" fill="#333"/></svg>
<svg style="left:22px;top:466.5px;" width="4" height="6" viewBox="0 0 4 6"><polygon points="3.8,0 3.8,6 0.3,3" fill="#333"/></svg>
<svg style="left:35.5px;top:466.5px;" width="4" height="6" viewBox="0 0 4 6"><polygon points="0.2,0 0.2,6 3.7,3" fill="#333"/></svg>
<svg style="left:49px;top:466.5px;" width="6" height="6" viewBox="0 0 6 6"><polygon points="0,0 0,6 3.5,3" fill="#333"/><rect x="4.3" y="0" width="1.3" height="6" fill="#333"/></svg>
<svg style="left:57px;top:463px;" width="278" height="13" viewBox="0 0 278 13"><path d="M0,0 L9,12.5 H72 L76,0" fill="#fff" stroke="#222" stroke-width="1"/><path d="M180,0 L175.5,12.5" fill="none" stroke="#222"/><path d="M231,0 L226,12.5" fill="none" stroke="#222"/><path d="M271,0 L266,12.5" fill="none" stroke="#222"/></svg>
<div class="t" style="left:67px;top:464px;font-size:10.5px;font-weight:bold;color:#000">Диаграмма</div>
<div class="t" style="left:141px;top:465px;font-size:10px;color:#111">Сводная таблица</div>
<div class="t" style="left:241.5px;top:465px;font-size:10px;color:#111">Данные</div>
<div class="t" style="left:291px;top:465px;font-size:10px;color:#111">Итоги</div>
<div class="a" style="left:332px;top:463px;width:2px;height:13px;background:#333"></div>
<div class="a" style="left:334px;top:463px;width:285px;height:13px;background:linear-gradient(#eef3fd,#f8fbff 60%,#f0f4fa)"></div>
<div class="a" style="left:334px;top:463px;width:14px;height:13px;border:1px solid #b8c8e8;border-radius:2px;background:linear-gradient(135deg,#e6eefc,#c8d8f8)"></div>
<svg style="left:338px;top:466px;" width="5" height="8" viewBox="0 0 5 8"><path d="M4.5,0.5 L1,4 L4.5,7.5" fill="none" stroke="#4d6185" stroke-width="1.8"/></svg>
<div class="a" style="left:357px;top:463px;width:219px;height:13px;border:1px solid #a8b8d8;border-radius:2px;background:linear-gradient(#c8d8f6,#dfe9fc 50%,#c4d4f2)"></div>
<div class="a" style="left:464px;top:467px;width:1px;height:6px;background:#8a9cc8"></div>
<div class="a" style="left:466px;top:467px;width:1px;height:6px;background:#8a9cc8"></div>
<div class="a" style="left:468px;top:467px;width:1px;height:6px;background:#8a9cc8"></div>
<div class="a" style="left:470px;top:467px;width:1px;height:6px;background:#8a9cc8"></div>
<div class="a" style="left:592px;top:463px;width:14px;height:13px;border:1px solid #b8c8e8;border-radius:2px;background:linear-gradient(135deg,#e6eefc,#c8d8f8)"></div>
<svg style="left:597px;top:466px;" width="5" height="8" viewBox="0 0 5 8"><path d="M0.5,0.5 L4,4 L0.5,7.5" fill="none" stroke="#4d6185" stroke-width="1.8"/></svg>
<div class="a" style="left:606px;top:463px;width:13px;height:13px;background:#f0efec"></div>
<div class="a" style="left:4px;top:476px;width:615px;height:17px;background:linear-gradient(#eceaf2,#e9e8ea 50%,#ede7ee)"></div>
<div class="t" style="left:7.5px;top:482.2px;font-size:9.6px;letter-spacing:-0.15px;color:#222">Переместить выделенные объекты</div>
<div class="t" style="left:506px;top:482.5px;font-size:9px;color:#222;-webkit-text-stroke:0.1px #222">NUM</div>
<div class="a" style="left:4px;top:492px;width:615px;height:1px;background:#e8f4fa"></div>
</body></html>
